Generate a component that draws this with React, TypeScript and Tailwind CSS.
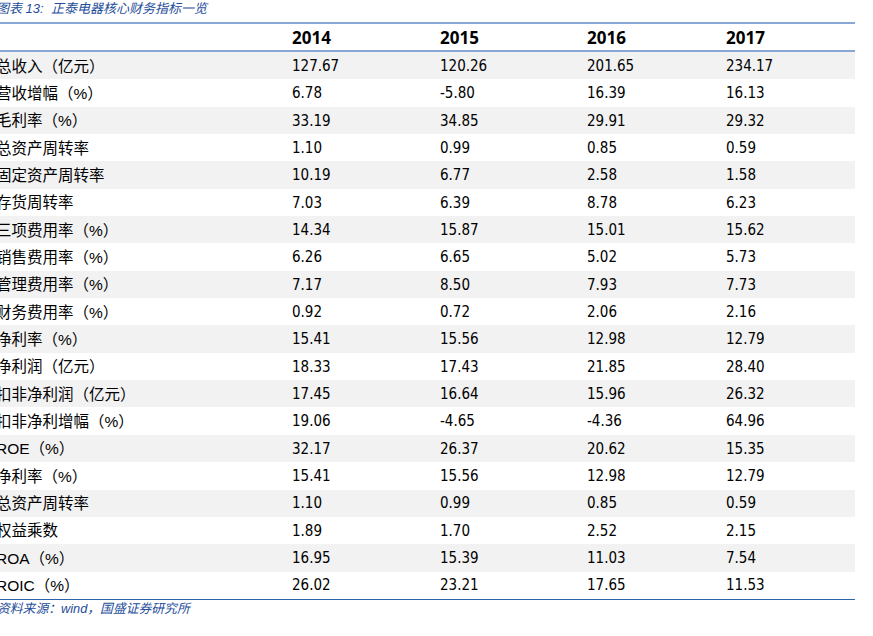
import React from 'react';

const rows: [string, string, string, string, string][] = [
  ['总收入（亿元）', '127.67', '120.26', '201.65', '234.17'],
  ['营收增幅（%）', '6.78', '-5.80', '16.39', '16.13'],
  ['毛利率（%）', '33.19', '34.85', '29.91', '29.32'],
  ['总资产周转率', '1.10', '0.99', '0.85', '0.59'],
  ['固定资产周转率', '10.19', '6.77', '2.58', '1.58'],
  ['存货周转率', '7.03', '6.39', '8.78', '6.23'],
  ['三项费用率（%）', '14.34', '15.87', '15.01', '15.62'],
  ['销售费用率（%）', '6.26', '6.65', '5.02', '5.73'],
  ['管理费用率（%）', '7.17', '8.50', '7.93', '7.73'],
  ['财务费用率（%）', '0.92', '0.72', '2.06', '2.16'],
  ['净利率（%）', '15.41', '15.56', '12.98', '12.79'],
  ['净利润（亿元）', '18.33', '17.43', '21.85', '28.40'],
  ['扣非净利润（亿元）', '17.45', '16.64', '15.96', '26.32'],
  ['扣非净利增幅（%）', '19.06', '-4.65', '-4.36', '64.96'],
  ['ROE（%）', '32.17', '26.37', '20.62', '15.35'],
  ['净利率（%）', '15.41', '15.56', '12.98', '12.79'],
  ['总资产周转率', '1.10', '0.99', '0.85', '0.59'],
  ['权益乘数', '1.89', '1.70', '2.52', '2.15'],
  ['ROA（%）', '16.95', '15.39', '11.03', '7.54'],
  ['ROIC（%）', '26.02', '23.21', '17.65', '11.53'],
];

const years = ['2014', '2015', '2016', '2017'];
const colW = ['w-[148px]', 'w-[147px]', 'w-[139px]', 'w-[129px]'];

const cjk = "font-['Liberation_Sans','Noto_Sans_CJK_SC',sans-serif]";
const num = "font-['DejaVu_Sans_Condensed','Liberation_Sans',sans-serif]";
const head = "font-['Open_Sans','Liberation_Sans',sans-serif]";

export default function App() {
  return (
    <div className="w-[873px] h-[636px] bg-white overflow-hidden relative">
      <div className={`h-[22px] flex items-center pb-[4px] text-[13px] italic text-[#1f4e9a] ${cjk}`}>
        <span className="-ml-[4px]">图表 13:&nbsp;&nbsp;正泰电器核心财务指标一览</span>
      </div>
      <div className="w-[855px]">
        <div className="border-t-2 border-[#8aa6d6]" />
        <div className="flex h-[28px] items-center border-b-2 border-[#8aa6d6]">
          <div className="w-[292px]" />
          {years.map((y, i) => (
            <div key={y} className={`${colW[i]} text-[17px] leading-none font-bold text-black ${head}`}>{y}</div>
          ))}
        </div>
        {rows.map((r, idx) => (
          <div key={idx} className={`flex h-[27.35px] items-center pt-[1px] ${idx % 2 === 0 ? 'bg-[#f2f2f2]' : 'bg-white'}`}>
            <div className={`w-[292px] overflow-hidden whitespace-nowrap text-[15.5px] text-black ${cjk}`}>
              <span className="-ml-[4px] inline-block">{r[0]}</span>
            </div>
            {r.slice(1).map((v, i) => (
              <div key={i} className={`${colW[i]} text-[15px] text-black ${num}`}>{v}</div>
            ))}
          </div>
        ))}
        <div className="border-t border-[#2e62ad]" />
      </div>
      <div className={`h-[18px] flex items-center text-[12.8px] italic text-[#1f4e9a] ${cjk}`}>
        <span className="-ml-[3px]">资料来源：wind，国盛证券研究所</span>
      </div>
    </div>
  );
}
